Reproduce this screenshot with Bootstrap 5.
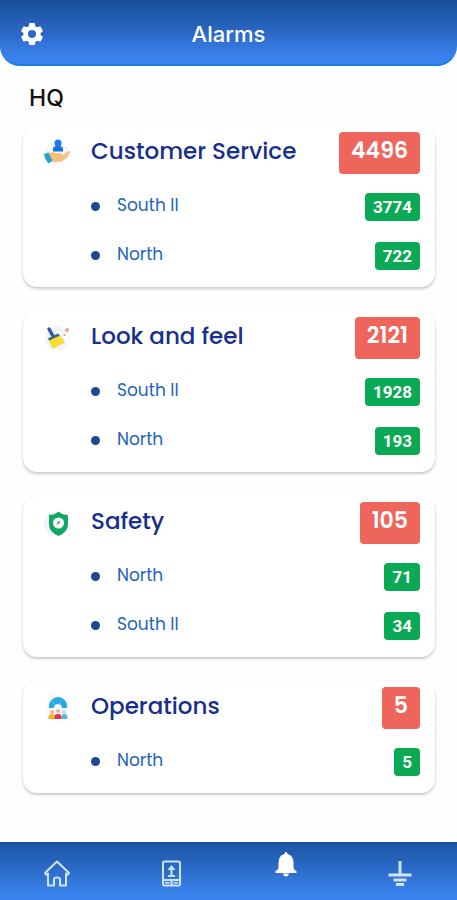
<!DOCTYPE html>
<html lang="en">
<head>
<meta charset="utf-8">
<meta name="viewport" content="width=device-width, initial-scale=1">
<title>Alarms</title>
<link href="https://cdn.jsdelivr.net/npm/bootstrap@5.3.0/dist/css/bootstrap.min.css" rel="stylesheet">
<style>
body { font-family: Poppins, Inter, sans-serif; background: #fefefe; }
.app-header { height: 66px; padding: 4px 20px 0; border-radius: 0 0 20px 20px; border-bottom: 2px solid #1580e4; background: linear-gradient(#184f98, #2865bf 45%, #3b82ee 90%); }
.app-title { font: 500 22px/32px Inter, sans-serif; }
.icon-btn { width: 24px; height: 24px; }
.site-name { font: 500 23px/32px Inter, sans-serif; color: #111; padding-left: 6px; margin: 16px 0 12px; }
.alarm-list { gap: 24px; padding: 0 22px 48px 23px; }
.alarm-card { border: 0; border-radius: 14px; padding: 6px 15px 7px 20px; background: #fff; box-shadow: 0 2px 3px rgba(0,0,0,.2), 0 0 2px rgba(0,0,0,.06); }
.alarm-head { height: 42px; margin-bottom: 8px; }
.alarm-icon { width: 28px; height: 28px; margin-right: 20px; }
.alarm-name { font-size: 23px; line-height: 32px; font-weight: 500; color: #172f8d; padding-bottom: 4px; }
.count-total { font-size: 22px; line-height: 38px; font-weight: 600; padding: 0 12px 4px; border-radius: 4px; background: #ee655b; }
.alarm-row { height: 49px; padding-left: 48px; }
.dot { width: 9px; height: 9px; margin-right: 17px; background: #1c4890; }
.region { font-size: 17px; line-height: 24px; color: #2464b8; padding-bottom: 4px; }
.count-part { font: 700 17px/28px Roboto, sans-serif; padding: 0 8px; border-radius: 4px; background: #0aa956; }
.tab-bar { height: 58px; border-top: 1px solid #174a91; background: linear-gradient(#1b55a4, #3b83ee 92%); }
.tab-link { color: #cfe3ff; padding-top: 4px; }
.tab-link:hover { color: #fff; }
.tab-link.active { color: #fff; padding: 0 0 12px; }
.tab-link svg { width: 28px; height: 28px; }
</style>
</head>
<body>
<div class="d-flex flex-column min-vh-100">
  <header class="app-header d-flex align-items-center text-white">
    <button type="button" class="icon-btn btn p-0 border-0 text-white d-flex" aria-label="Settings">
      <svg viewBox="0 0 24 24" width="24" height="24" fill="currentColor"><path fill-rule="evenodd" d="M9.3 1h5.4l.6 3.2 1.9 1.1 3.1-1.1 2.7 4.7-2.4 2v2.2l2.4 2-2.7 4.7-3.1-1.1-1.9 1.1-.6 3.2H9.3l-.6-3.2-1.9-1.1-3.1 1.1L1 15.1l2.4-2v-2.2L1 8.900l2.700-4.700 3.100 1.100 1.900-1.100zM12 8a4 4 0 1 0 0 8 4 4 0 0 0 0-8z"/></svg>
    </button>
    <h1 class="app-title flex-grow-1 text-center m-0 pe-4">Alarms</h1>
  </header>

  <main class="alarm-list d-flex flex-column flex-grow-1">
    <div class="d-flex flex-column">
      <h2 class="site-name">HQ</h2>
      <section class="alarm-card card">
        <div class="alarm-head d-flex align-items-center">
          <svg class="alarm-icon" viewBox="0 0 28 28" aria-hidden="true"><circle cx="14" cy="14" r="12" fill="#f0f8fd"/><circle cx="15" cy="4" r="3.500" fill="#167de6"/><path d="M10 12.500V10q0-2.500 3-3h4q3 .5 3 3v2.500z" fill="#1473df"/><path d="M5 15q4-3 8-.8l6 .3q1.500 1.500-.5 2.500l7-5q2-.5 1.500 1.500-3 6-8 8.500-5 1.500-11 .5z" fill="#f7bd79"/><path d="M1 15l4.500-1.500 4 8-3.500 3q-4-3-5-9.500z" fill="#25a3cf"/></svg>
          <h3 class="alarm-name m-0 flex-grow-1">Customer Service</h3><span class="count-total text-white">4496</span>
        </div>
        <div class="alarm-row d-flex align-items-center"><span class="dot rounded-circle"></span><span class="region flex-grow-1">South II</span><span class="count-part text-white">3774</span></div>
        <div class="alarm-row d-flex align-items-center"><span class="dot rounded-circle"></span><span class="region flex-grow-1">North</span><span class="count-part text-white">722</span></div>
      </section>
    </div>

    <section class="alarm-card card">
      <div class="alarm-head d-flex align-items-center">
        <svg class="alarm-icon" viewBox="0 0 28 28" aria-hidden="true"><circle cx="14" cy="14" r="12" fill="#eef5fb"/><path d="M6 5l4 7" stroke="#2e59ac" stroke-width="3.500" stroke-linecap="round"/><path d="M5 14.500l10-5 2.500 3-11 5z" fill="#3c5d92"/><path d="M6 16.500l11-5 5 7-12 6q-2-2-4-8z" fill="#fadc32"/><path d="M21 10h4v8h-3z" fill="#fff"/><circle cx="24" cy="6" r="2" fill="#f3a193"/><circle cx="21.500" cy="11" r="1" fill="#f2907a"/></svg>
        <h3 class="alarm-name m-0 flex-grow-1">Look and feel</h3><span class="count-total text-white">2121</span>
      </div>
      <div class="alarm-row d-flex align-items-center"><span class="dot rounded-circle"></span><span class="region flex-grow-1">South II</span><span class="count-part text-white">1928</span></div>
      <div class="alarm-row d-flex align-items-center"><span class="dot rounded-circle"></span><span class="region flex-grow-1">North</span><span class="count-part text-white">193</span></div>
    </section>

    <section class="alarm-card card">
      <div class="alarm-head d-flex align-items-center">
        <svg class="alarm-icon" viewBox="0 0 28 28" aria-hidden="true"><circle cx="13" cy="15" r="12" fill="#eef3fd"/><path d="M15.500 2.500q4 3.500 9.500 3.500V15q0 8-9.500 12Q6 23 6 15V6q5.500 0 9.500-3.500z" fill="#12a864"/><circle cx="15.500" cy="14" r="5.500" fill="#fff"/><path d="M13.500 16l1-3 3-1.500-1 3z" fill="#74a58b"/></svg>
        <h3 class="alarm-name m-0 flex-grow-1">Safety</h3><span class="count-total text-white">105</span>
      </div>
      <div class="alarm-row d-flex align-items-center"><span class="dot rounded-circle"></span><span class="region flex-grow-1">North</span><span class="count-part text-white">71</span></div>
      <div class="alarm-row d-flex align-items-center"><span class="dot rounded-circle"></span><span class="region flex-grow-1">South II</span><span class="count-part text-white">34</span></div>
    </section>

    <section class="alarm-card card">
      <div class="alarm-head d-flex align-items-center">
        <svg class="alarm-icon" viewBox="0 0 28 28" aria-hidden="true"><circle cx="14" cy="15" r="12" fill="#f6fafd"/><path d="M6 14V12a9 9 0 0 1 18 0v2h-5a4 4 0 0 0-8 0z" fill="#28a9e4"/><path d="M9 6l3 5m6-5l-2 5" stroke="#55c2ef"/><circle cx="9" cy="18" r="2" fill="#f3b797"/><circle cx="15" cy="17" r="2" fill="#f4a98c"/><circle cx="21" cy="18" r="2" fill="#bfd9e9"/><path d="M5.500 25v-2q0-3 3.500-3t3 3v2z" fill="#fcb52b"/><path d="M11.500 25v-2q0-3 3.500-3t3.500 3v2z" fill="#e5324e"/><path d="M18.500 25v-2q0-3 3-3t3 3v2z" fill="#58b7e3"/></svg>
        <h3 class="alarm-name m-0 flex-grow-1">Operations</h3><span class="count-total text-white">5</span>
      </div>
      <div class="alarm-row d-flex align-items-center"><span class="dot rounded-circle"></span><span class="region flex-grow-1">North</span><span class="count-part text-white">5</span></div>
    </section>
  </main>

  <nav class="tab-bar row g-0" aria-label="Main">
    <a href="#" class="tab-link col d-flex align-items-center justify-content-center" aria-label="Home"><svg viewBox="0 0 28 28" fill="none" stroke="currentColor" stroke-width="2" stroke-linejoin="round"><path d="M14 1.500L2 13l1.500 1.800L5 13.500v12h6v-6q0-2 3-2t3 2v6h6v-12l1.500 1.300L26 13z"/></svg></a>
    <a href="#" class="tab-link col d-flex align-items-center justify-content-center" aria-label="Device"><svg viewBox="0 0 28 28" fill="none" stroke="currentColor" stroke-width="2"><rect x="6" y="1.500" width="17" height="24" rx="1.500"/><path d="M6 20h17M14.500 16V7M11 16h7M14.500 20v5"/><path d="M10.500 10l4-5 4 5z" fill="currentColor" stroke="none"/><path d="M8 22.800h4.500m4 0H21" stroke-width="1.500"/></svg></a>
    <a href="#" class="tab-link active col d-flex align-items-center justify-content-center" aria-label="Alarms" aria-current="page"><svg viewBox="0 0 28 28" fill="currentColor"><path d="M14 0q1.500 0 1.500 2 6 1.500 6 8.500v5q.3 2.500 3 3.500v2H3.500v-2q2.700-1 3-3.500v-5q0-7 6-8.500 0-2 1.500-2zM11 21.500h6q-.5 3-3 3t-3-3z"/></svg></a>
    <a href="#" class="tab-link col d-flex align-items-center justify-content-center" aria-label="Ground"><svg viewBox="0 0 28 28" fill="none" stroke="currentColor"><path d="M14 1v13" stroke-width="3"/><path d="M2.500 15h23M7.500 20h13M10 24.500h8" stroke-width="3"/></svg></a>
  </nav>
</div>
<script src="https://cdn.jsdelivr.net/npm/bootstrap@5.3.0/dist/js/bootstrap.bundle.min.js"></script>
</body>
</html>
